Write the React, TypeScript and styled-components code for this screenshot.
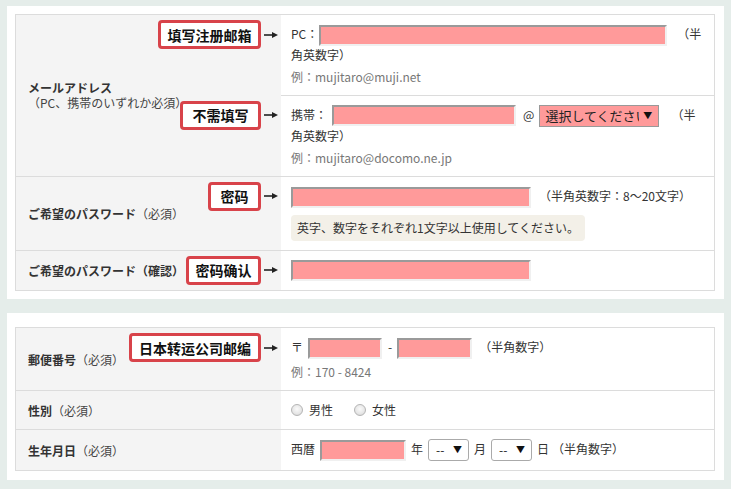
import React from "react";
import styled, { createGlobalStyle } from "styled-components";

const GlobalStyle = createGlobalStyle`
  * { box-sizing: border-box; }
  html, body { margin: 0; padding: 0; }
  body {
    background: #e5edea;
    font-family: "Noto Sans CJK JP", "Noto Sans", sans-serif;
    font-size: 12px;
    color: #333;
  }
`;

const Page = styled.div`
  padding: 6px 7px 8px 7px;
  display: flex;
  flex-direction: column;
  gap: 14px;
`;

const Panel = styled.section<{ $top: number; $bottom: number }>`
  background: #fff;
  padding: ${(p) => p.$top}px 9px ${(p) => p.$bottom}px 8px;
`;

const Grid = styled.div`
  display: grid;
  grid-template-columns: 265px 1fr;
  border: 1px solid #dcdcdc;
`;

const Label = styled.div<{ $rows?: number; $top?: boolean }>`
  grid-row: span ${(p) => p.$rows ?? 1};
  background: #f4f4f4;
  display: flex;
  flex-direction: column;
  justify-content: center;
  padding: 0 12px;
  line-height: 15px;
  border-top: ${(p) => (p.$top ? "1px solid #dcdcdc" : "none")};
`;

const Title = styled.span`
  font-weight: 700;
  color: #333;
`;

const Sub = styled.span`
  font-weight: 400;
  color: #444;
`;

const Cell = styled.div<{ $top?: boolean }>`
  position: relative;
  padding: 10px 10px 9px 10px;
  line-height: 18px;
  border-top: ${(p) => (p.$top ? "1px solid #dcdcdc" : "none")};
`;

const Line = styled.div`
  line-height: 18px;
`;

const TextBox = styled.input<{ $w: number; $ml?: number; $mr?: number }>`
  display: inline-block;
  vertical-align: middle;
  width: ${(p) => p.$w}px;
  height: 21px;
  margin: -1px ${(p) => p.$mr ?? 0}px 0 ${(p) => p.$ml ?? 0}px;
  padding: 0;
  background: #ff9a9a;
  border-top: 2px solid #9a9a9a;
  border-left: 2px solid #9a9a9a;
  border-right: 2px solid #f0f0f0;
  border-bottom: 2px solid #f0f0f0;
  outline: none;
`;

const Note = styled.span<{ $ml: number }>`
  margin-left: ${(p) => p.$ml}px;
  color: #333;
`;

const Example = styled.div`
  margin-top: 4px;
  color: #777;
`;

const Hint = styled.div`
  display: inline-block;
  margin-top: 7px;
  padding: 4px 6px;
  background: #f3f0e8;
  border-radius: 4px;
  color: #333;
`;

const Dropdown = styled.span<{ $w: number; $pink?: boolean }>`
  display: inline-flex;
  align-items: center;
  vertical-align: middle;
  width: ${(p) => p.$w}px;
  height: 22px;
  margin: -1px 5px 0 5px;
  padding: 0 6px 0 ${(p) => (p.$pink ? 5 : 7)}px;
  background: ${(p) => (p.$pink ? "#ff9a9a" : "#fff")};
  border: 1px solid ${(p) => (p.$pink ? "#999" : "#aaa")};
  border-radius: ${(p) => (p.$pink ? 0 : 3)}px;
  color: #222;
  font-size: ${(p) => (p.$pink ? 13 : 12)}px;
  line-height: 18px;
`;

const DropText = styled.span`
  flex: 1;
  overflow: hidden;
  white-space: nowrap;
`;

const DropArrow = styled.span`
  font-size: 9px;
  margin-left: 4px;
  color: #111;
`;

const Glyph = styled.span<{ $ml?: number; $mr?: number }>`
  margin: 0 ${(p) => p.$mr ?? 0}px 0 ${(p) => p.$ml ?? 0}px;
`;

const RadioGroup = styled.span`
  display: inline-flex;
  align-items: center;
  gap: 6px;
  margin-right: 21px;
`;

const Radio = styled.span`
  display: inline-block;
  width: 12px;
  height: 12px;
  border-radius: 50%;
  border: 1px solid #b5b5b5;
  background: radial-gradient(circle at 50% 40%, #fafafa 0%, #e6e6e6 60%, #cfcfcf 100%);
`;

const Callout = styled.div`
  position: absolute;
  right: calc(100% + 3px);
  top: 5px;
  display: flex;
  align-items: center;
  gap: 3px;
`;

const Tag = styled.div<{ $w: number }>`
  width: ${(p) => p.$w}px;
  height: 29px;
  border: 3px solid #d8434a;
  border-radius: 4px;
  background: #fff;
  display: flex;
  align-items: center;
  justify-content: center;
  font-family: "Noto Sans CJK SC", "Noto Sans", sans-serif;
  font-weight: 700;
  font-size: 14px;
  color: #111;
  white-space: nowrap;
`;

const Arrow = () => (
  <svg width="14" height="8" viewBox="0 0 14 8">
    <path d="M0 4 H9" stroke="#222" strokeWidth="1.6" />
    <path d="M8 1 L14 4 L8 7 Z" fill="#222" />
  </svg>
);

const Annotation = ({ text, w }: { text: string; w: number }) => (
  <Callout>
    <Tag $w={w}>{text}</Tag>
    <Arrow />
  </Callout>
);

export default function App() {
  return (
    <>
      <GlobalStyle />
      <Page>
        <Panel $top={8} $bottom={8}>
          <Grid>
            <Label $rows={2}>
              <Title>メールアドレス</Title>
              <Sub>（PC、携帯のいずれか必須）</Sub>
            </Label>
            <Cell>
              <Annotation text="填写注册邮箱" w={103} />
              <Line>
                PC：<TextBox readOnly $w={348} $ml={1} />
                <Note $ml={10}>（半角英数字）</Note>
              </Line>
              <Example>例：mujitaro@muji.net</Example>
            </Cell>
            <Cell $top>
              <Annotation text="不需填写" w={81} />
              <Line>
                携帯：<TextBox readOnly $w={184} $ml={5} />
                <Glyph $ml={7}>@</Glyph>
                <Dropdown $w={120} $pink>
                  <DropText>選択してください</DropText>
                  <DropArrow>▼</DropArrow>
                </Dropdown>
                <Note $ml={7}>（半角英数字）</Note>
              </Line>
              <Example>例：mujitaro@docomo.ne.jp</Example>
            </Cell>

            <Label $top>
              <div>
                <Title>ご希望のパスワード</Title>
                <Sub>（必須）</Sub>
              </div>
            </Label>
            <Cell $top>
              <Annotation text="密码" w={53} />
              <Line>
                <TextBox readOnly $w={240} />
                <Note $ml={8}>（半角英数字：8〜20文字）</Note>
              </Line>
              <Hint>英字、数字をそれぞれ1文字以上使用してください。</Hint>
            </Cell>

            <Label $top>
              <Title>ご希望のパスワード（確認）</Title>
            </Label>
            <Cell $top>
              <Annotation text="密码确认" w={75} />
              <Line>
                <TextBox readOnly $w={240} />
              </Line>
            </Cell>
          </Grid>
        </Panel>

        <Panel $top={14} $bottom={9}>
          <Grid>
            <Label>
              <div>
                <Title>郵便番号</Title>
                <Sub>（必須）</Sub>
              </div>
            </Label>
            <Cell>
              <Annotation text="日本转运公司邮编" w={132} />
              <Line>
                〒<TextBox readOnly $w={74} $ml={5} />
                <Glyph $ml={6} $mr={5}>-</Glyph>
                <TextBox readOnly $w={75} />
                <Note $ml={7}>（半角数字）</Note>
              </Line>
              <Example>例：170 - 8424</Example>
            </Cell>

            <Label $top>
              <div>
                <Title>性別</Title>
                <Sub>（必須）</Sub>
              </div>
            </Label>
            <Cell $top>
              <Line>
                <RadioGroup>
                  <Radio />
                  男性
                </RadioGroup>
                <RadioGroup>
                  <Radio />
                  女性
                </RadioGroup>
              </Line>
            </Cell>

            <Label $top>
              <div>
                <Title>生年月日</Title>
                <Sub>（必須）</Sub>
              </div>
            </Label>
            <Cell $top>
              <Line>
                西暦<TextBox readOnly $w={86} $ml={5} $mr={5} />年
                <Dropdown $w={41}>
                  <DropText>--</DropText>
                  <DropArrow>▼</DropArrow>
                </Dropdown>
                月
                <Dropdown $w={41}>
                  <DropText>--</DropText>
                  <DropArrow>▼</DropArrow>
                </Dropdown>
                日<Note $ml={3}>（半角数字）</Note>
              </Line>
            </Cell>
          </Grid>
        </Panel>
      </Page>
    </>
  );
}
